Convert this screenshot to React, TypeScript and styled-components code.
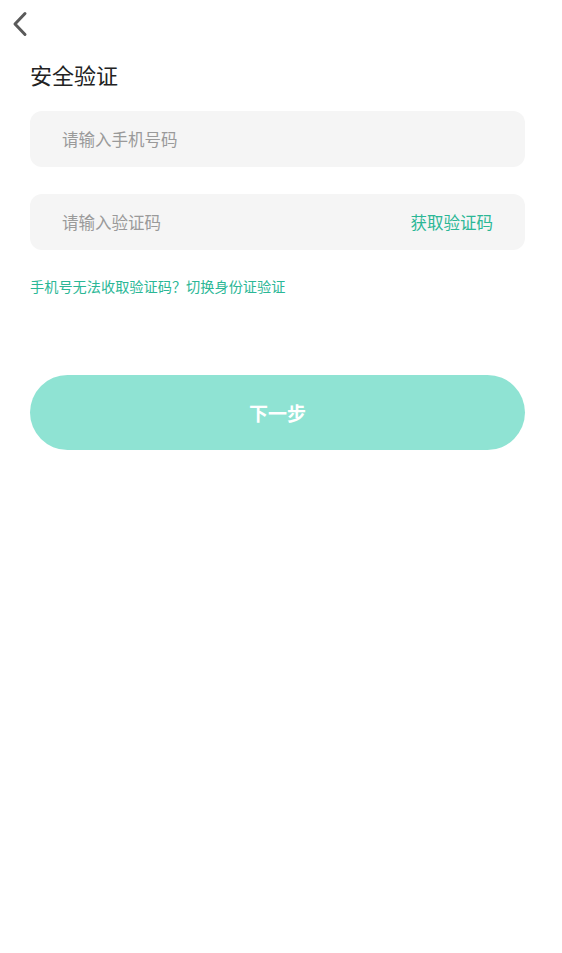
import React from 'react'
import styled, { createGlobalStyle } from 'styled-components'

const Color = {
  green: '#2bb796',
  button: '#8fe3d3',
  field: '#f5f5f5',
  placeholder: '#9a9a9a',
  title: '#222222',
  icon: '#5a5a5a',
}

const GlobalStyle = createGlobalStyle`
  html, body {
    margin: 0;
    padding: 0;
    background: #ffffff;
    font-family: "Noto Sans CJK SC", "Noto Sans", sans-serif;
  }
`

const App: React.FC = () => {
  return (
    <Root>
      <GlobalStyle />
      <NavBar>
        <BackButton aria-label="返回">
          <svg width="16" height="26" viewBox="0 0 16 26" fill="none">
            <path d="M13 2.5L3 13L13 23.5" stroke={Color.icon} strokeWidth="3" strokeLinecap="round" strokeLinejoin="round" />
          </svg>
        </BackButton>
      </NavBar>
      <Content>
        <Title>安全验证</Title>
        <Field>
          <Input placeholder="请输入手机号码" />
        </Field>
        <Field>
          <Input placeholder="请输入验证码" />
          <CodeButton>获取验证码</CodeButton>
        </Field>
        <SwitchLink>手机号无法收取验证码？切换身份证验证</SwitchLink>
        <NextButton>下一步</NextButton>
      </Content>
    </Root>
  )
}

export default App


const Root = styled('div')`
  min-height: 953px;
  background: #ffffff;
`

const NavBar = styled('div')`
  height: 48px;
  display: flex;
  align-items: center;
  padding-left: 10px;
`

const BackButton = styled('button')`
  border: none;
  background: none;
  padding: 0;
  width: 20px;
  height: 26px;
  display: flex;
  align-items: center;
  justify-content: center;
`

const Content = styled('div')`
  padding: 0 37px 0 30px;
  display: flex;
  flex-direction: column;
`

const Title = styled('div')`
  font-size: 22px;
  line-height: 30px;
  color: ${Color.title};
  margin-top: 11px;
  margin-bottom: 22px;
`

const Field = styled('div')`
  height: 56px;
  border-radius: 12px;
  background: ${Color.field};
  display: flex;
  align-items: center;
  padding: 0 32px;
  margin-bottom: 27px;
`

const Input = styled('input')`
  flex: 1;
  min-width: 0;
  border: none;
  outline: none;
  background: transparent;
  font-family: inherit;
  font-size: 16.5px;
  color: ${Color.title};
  padding: 0;

  &::placeholder {
    color: ${Color.placeholder};
  }
`

const CodeButton = styled('span')`
  font-size: 16.5px;
  color: ${Color.green};
  flex-shrink: 0;
`

const SwitchLink = styled('div')`
  font-size: 14.2px;
  line-height: 20px;
  color: ${Color.green};
  margin-top: -1px;
`

const NextButton = styled('button')`
  margin-top: 79px;
  height: 75px;
  border: none;
  border-radius: 38px;
  background: ${Color.button};
  color: #ffffff;
  font-family: inherit;
  font-size: 19px;
  font-weight: 700;
  letter-spacing: 0;
`
